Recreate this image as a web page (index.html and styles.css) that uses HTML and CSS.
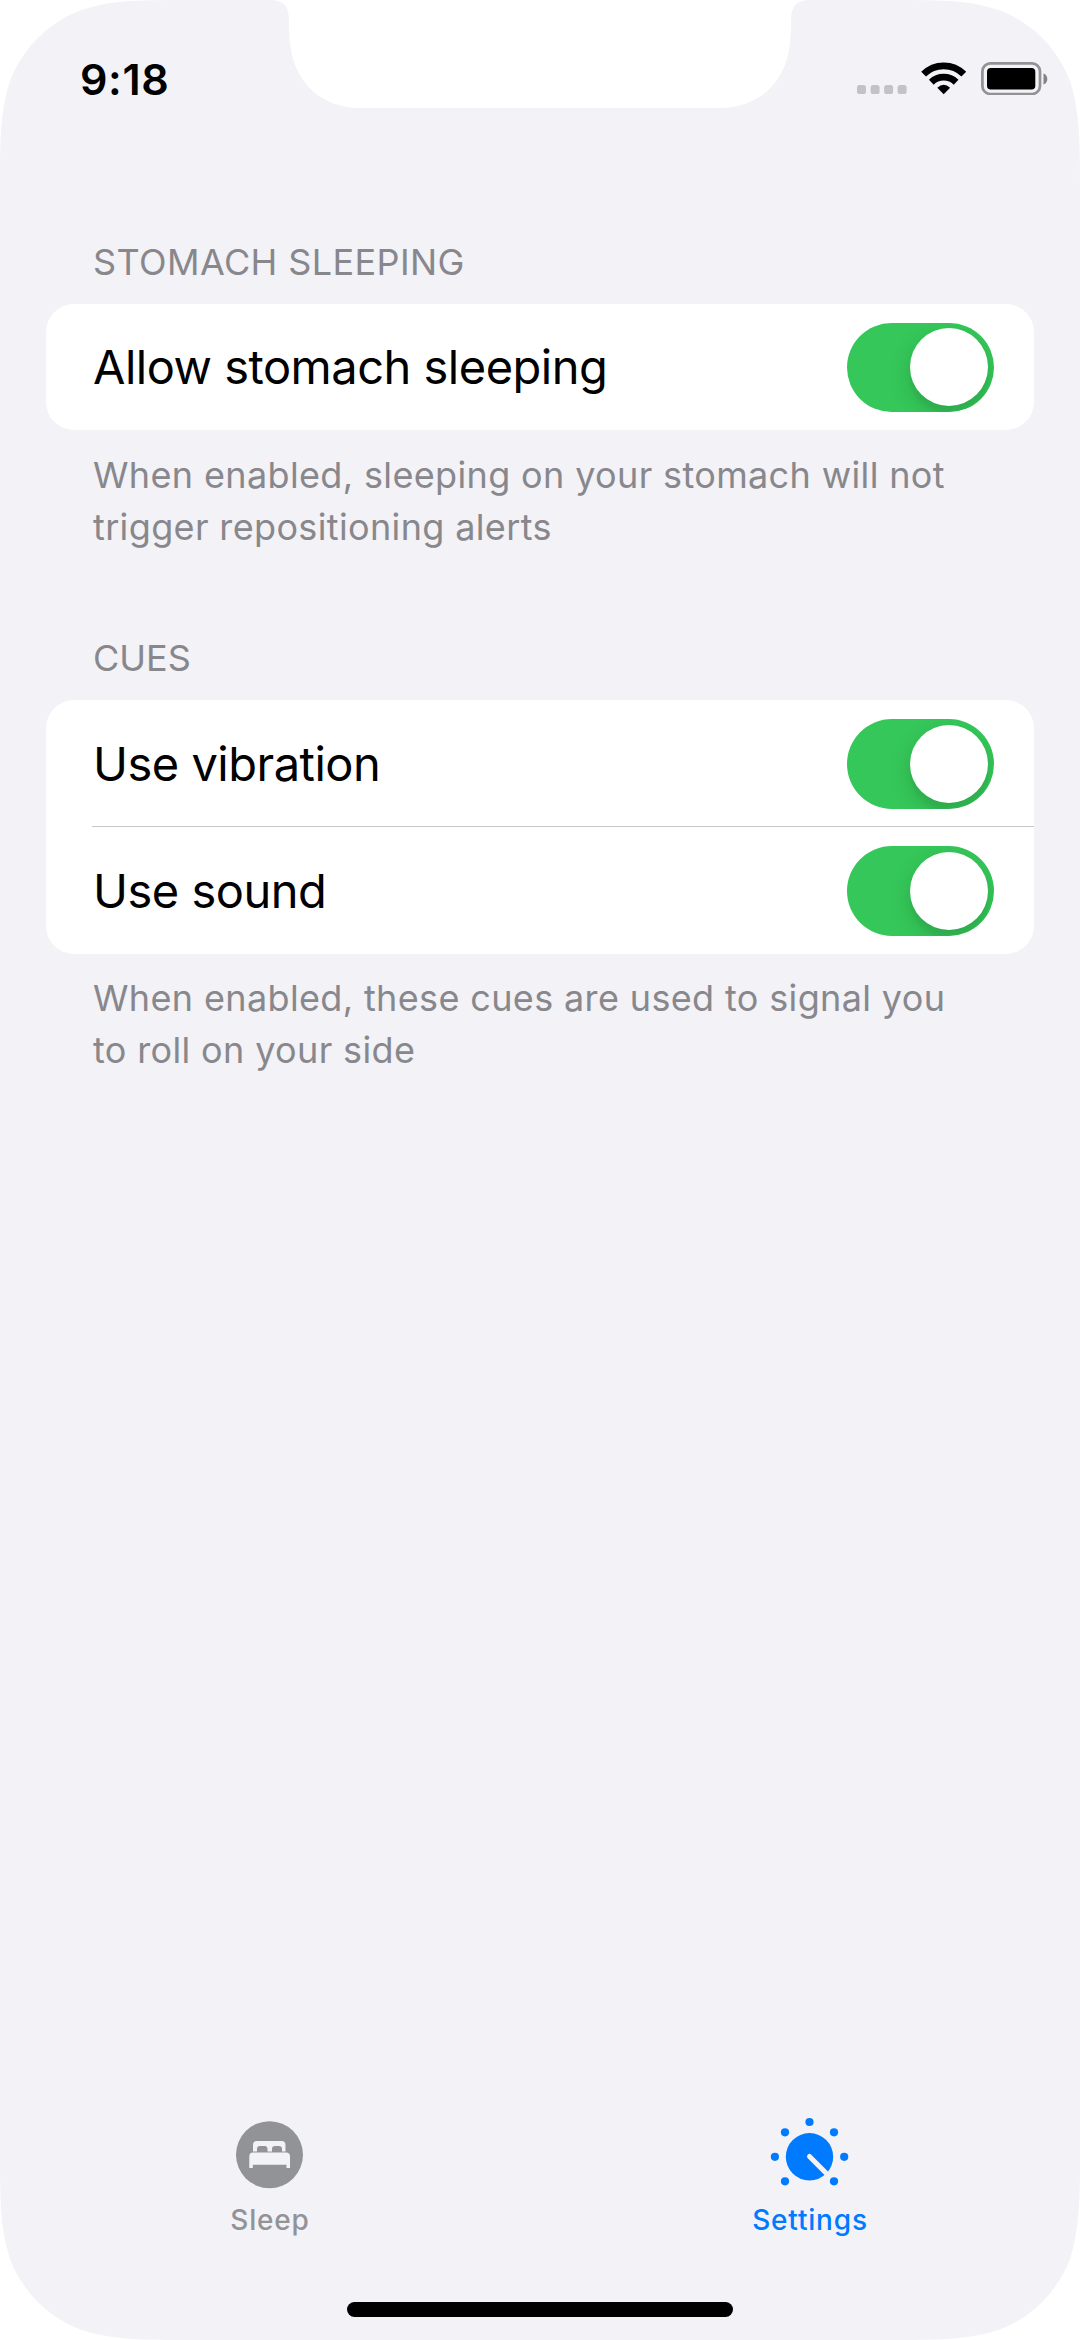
FILE: index.html
```html
<!DOCTYPE html>
<html lang="en">
<head>
<meta charset="utf-8">
<title>Settings</title>
<link rel="stylesheet" href="styles.css">
</head>
<body>
<div class="screen">
  <svg class="screen-shape" viewBox="0 0 1080 2340" aria-hidden="true">
    <path fill="#f2f2f7" d="M198.7 0H270C283 0 288.6 6 288.8 18C289 32 289.5 42 291 50C297 84 322 108 360 108H720C758 108 783 84 789 50C790.500 42 791 32 791.200 18C791.400 6 797 0 810 0H881.300C938.500 0 967.100 0 992.900 8.500L997.900 9.700C1031.500 22 1058 48.500 1070.300 82.100C1080 112.900 1080 141.500 1080 198.700V2141.300C1080 2198.500 1080 2227.100 1070.300 2257.900C1058 2291.500 1031.500 2318 997.900 2330.300C967.100 2340 938.500 2340 881.300 2340H198.700C141.500 2340 112.900 2340 82.100 2330.300C48.500 2318 22 2291.500 9.700 2257.900C0 2227.100 0 2198.500 0 2141.300V198.700C0 141.500 0 112.900 9.700 82.100C22 48.500 48.500 22 82.100 9.700L87.100 8.500C112.900 0 141.500 0 198.700 0Z"/>
  </svg>

  <header class="status-bar">
    <span class="clock">9:18</span>
    <svg class="status-icons" viewBox="0 0 192 34" aria-hidden="true">
      <g fill="#c3c2c7">
        <rect x="1" y="24" width="9" height="9" rx="2.600"/>
        <rect x="14.600" y="24" width="9" height="9" rx="2.600"/>
        <rect x="28.100" y="24" width="9" height="9" rx="2.600"/>
        <rect x="41.600" y="24" width="9" height="9" rx="2.600"/>
      </g>
      <g fill="none" stroke="#000" stroke-width="6.800">
        <path d="M67.600 13.200A28.500 28.500 0 0 1 107.800 13.200"/>
        <path d="M75.300 21.200A17.800 17.800 0 0 1 100.100 21.200"/>
      </g>
      <path d="M81.300 26.800Q87.700 20.700 94.100 26.800L87.700 33.300Z"/>
      <rect x="126.400" y="2.400" width="57.600" height="30.600" rx="8" fill="none" stroke="#929195" stroke-width="2.700"/>
      <rect x="131" y="7" width="48.300" height="21.500" rx="3.800"/>
      <path fill="#838287" d="M187.500 12.500C192.600 14 192.600 22 187.500 23.500Z"/>
    </svg>
  </header>

  <main class="settings">
    <section class="group">
      <h2 class="group-title title-wide">STOMACH SLEEPING</h2>
      <div class="card">
        <div class="row"><span class="row-label">Allow stomach sleeping</span><span class="switch"><span class="knob"></span></span></div>
      </div>
      <p class="note">When enabled, sleeping on your stomach will not<br>trigger repositioning alerts</p>
    </section>
    <section class="group">
      <h2 class="group-title">CUES</h2>
      <div class="card">
        <div class="row divided"><span class="row-label">Use vibration</span><span class="switch"><span class="knob"></span></span></div>
        <div class="row"><span class="row-label">Use sound</span><span class="switch"><span class="knob"></span></span></div>
      </div>
      <p class="note">When enabled, these cues are used to signal you<br>to roll on your side</p>
    </section>
  </main>

  <nav class="tab-bar">
    <a class="tab">
      <svg class="tab-icon" viewBox="0 0 80 80" aria-hidden="true">
        <circle cx="39.500" cy="38.700" r="33.500" fill="#929397"/>
        <path fill="#f2f2f7" d="M23 35.500V29Q23 25 27 25H51.500Q55.500 25 55.500 29V35.500H52V33Q52 30 49 30H45Q42 30 42 33V35.500H37.500V33Q37.500 30 34.500 30H30Q27 30 27 33V35.500ZM23 36.500H56Q60 36.500 60 40.500V52H56.500V48.700H22.800V52H19.300V40.500Q19.300 36.500 23 36.500Z"/>
      </svg>
      <span class="tab-label">Sleep</span>
    </a>
    <a class="tab active">
      <svg class="tab-icon" viewBox="0 0 80 80" aria-hidden="true">
        <circle cx="39.500" cy="40.800" r="23.700" fill="#007aff"/>
        <path d="M39.500 40.500L58 59" stroke="#f2f2f7" stroke-width="5" stroke-linecap="round"/>
        <g fill="#007aff">
          <circle cx="39.500" cy="6" r="4.100"/>
          <circle cx="15" cy="16.300" r="4.100"/>
          <circle cx="64" cy="16.300" r="4.100"/>
          <circle cx="4.900" cy="40.800" r="4.100"/>
          <circle cx="74.200" cy="40.800" r="4.100"/>
          <circle cx="15" cy="65.300" r="4.100"/>
          <circle cx="64" cy="65.300" r="4.100"/>
        </g>
      </svg>
      <span class="tab-label">Settings</span>
    </a>
  </nav>
  <div class="home-indicator"></div>
</div>
</body>
</html>
```
FILE: styles.css
```css
* {
  box-sizing: border-box;
  margin: 0;
  padding: 0;
}

body {
  width: 1080px;
  height: 2340px;
  background: #fff;
  font-family: Inter, "Liberation Sans", sans-serif;
  color: #000;
}

.screen {
  position: relative;
  isolation: isolate;
  display: flex;
  flex-direction: column;
  width: 1080px;
  height: 2340px;
  overflow: hidden;
}

.screen-shape {
  position: absolute;
  inset: 0;
  z-index: -1;
  width: 1080px;
  height: 2340px;
}

.status-bar {
  display: flex;
  justify-content: space-between;
  align-items: flex-start;
  height: 160px;
  padding: 61px 32px 0 80px;
}

.clock {
  margin-top: -8px;
  font-size: 43px;
  line-height: 52px;
  font-weight: 600;
  letter-spacing: 0.6px;
}

.status-icons {
  width: 192px;
  height: 34px;
}

.settings {
  flex: 1;
  padding: 75.5px 46px 0;
}

.group {
  margin-bottom: 79px;
}

.group-title {
  height: 68px;
  padding: 0 47px;
  font-size: 36px;
  line-height: 52px;
  font-weight: 400;
  color: #88878c;
}

.title-wide {
  letter-spacing: 0.4px;
}

.card {
  width: 988px;
  border-radius: 28px;
  background: #fff;
}

.row {
  display: flex;
  justify-content: space-between;
  align-items: center;
  height: 126.5px;
  padding: 1px 40px 0 47px;
}

.row.divided {
  height: 127px;
  background: linear-gradient(#c6c6c8, #c6c6c8) 46px 126px / 942px 1px no-repeat;
}

.row-label {
  font-size: 47px;
  line-height: 60px;
  letter-spacing: -0.5px;
}

.switch {
  display: flex;
  justify-content: flex-end;
  align-items: center;
  width: 147px;
  height: 89.5px;
  padding-right: 6px;
  border-radius: 45px;
  background: #35c759;
  overflow: hidden;
}

.knob {
  width: 78px;
  height: 78px;
  border-radius: 50%;
  background: #fff;
  box-shadow: 0 8px 22px rgba(0, 0, 0, 0.15), 0 8px 3px rgba(0, 0, 0, 0.03);
}

.note {
  padding: 18.5px 47px 0.5px;
  font-size: 36px;
  line-height: 52px;
  letter-spacing: 0.36px;
  color: #88878c;
  white-space: nowrap;
}

.tab-bar {
  display: flex;
  height: 186px;
}

.tab {
  flex: 1;
  display: flex;
  flex-direction: column;
  align-items: center;
  color: #929397;
}

.tab.active {
  color: #007aff;
}

.tab-icon {
  width: 80px;
  height: 80px;
}

.tab-label {
  margin-top: 6px;
  font-size: 28px;
  line-height: 36px;
  font-weight: 500;
  letter-spacing: 0.8px;
}

.home-indicator {
  align-self: center;
  width: 386px;
  height: 15px;
  margin-bottom: 23px;
  border-radius: 8px;
  background: #000;
}
```
